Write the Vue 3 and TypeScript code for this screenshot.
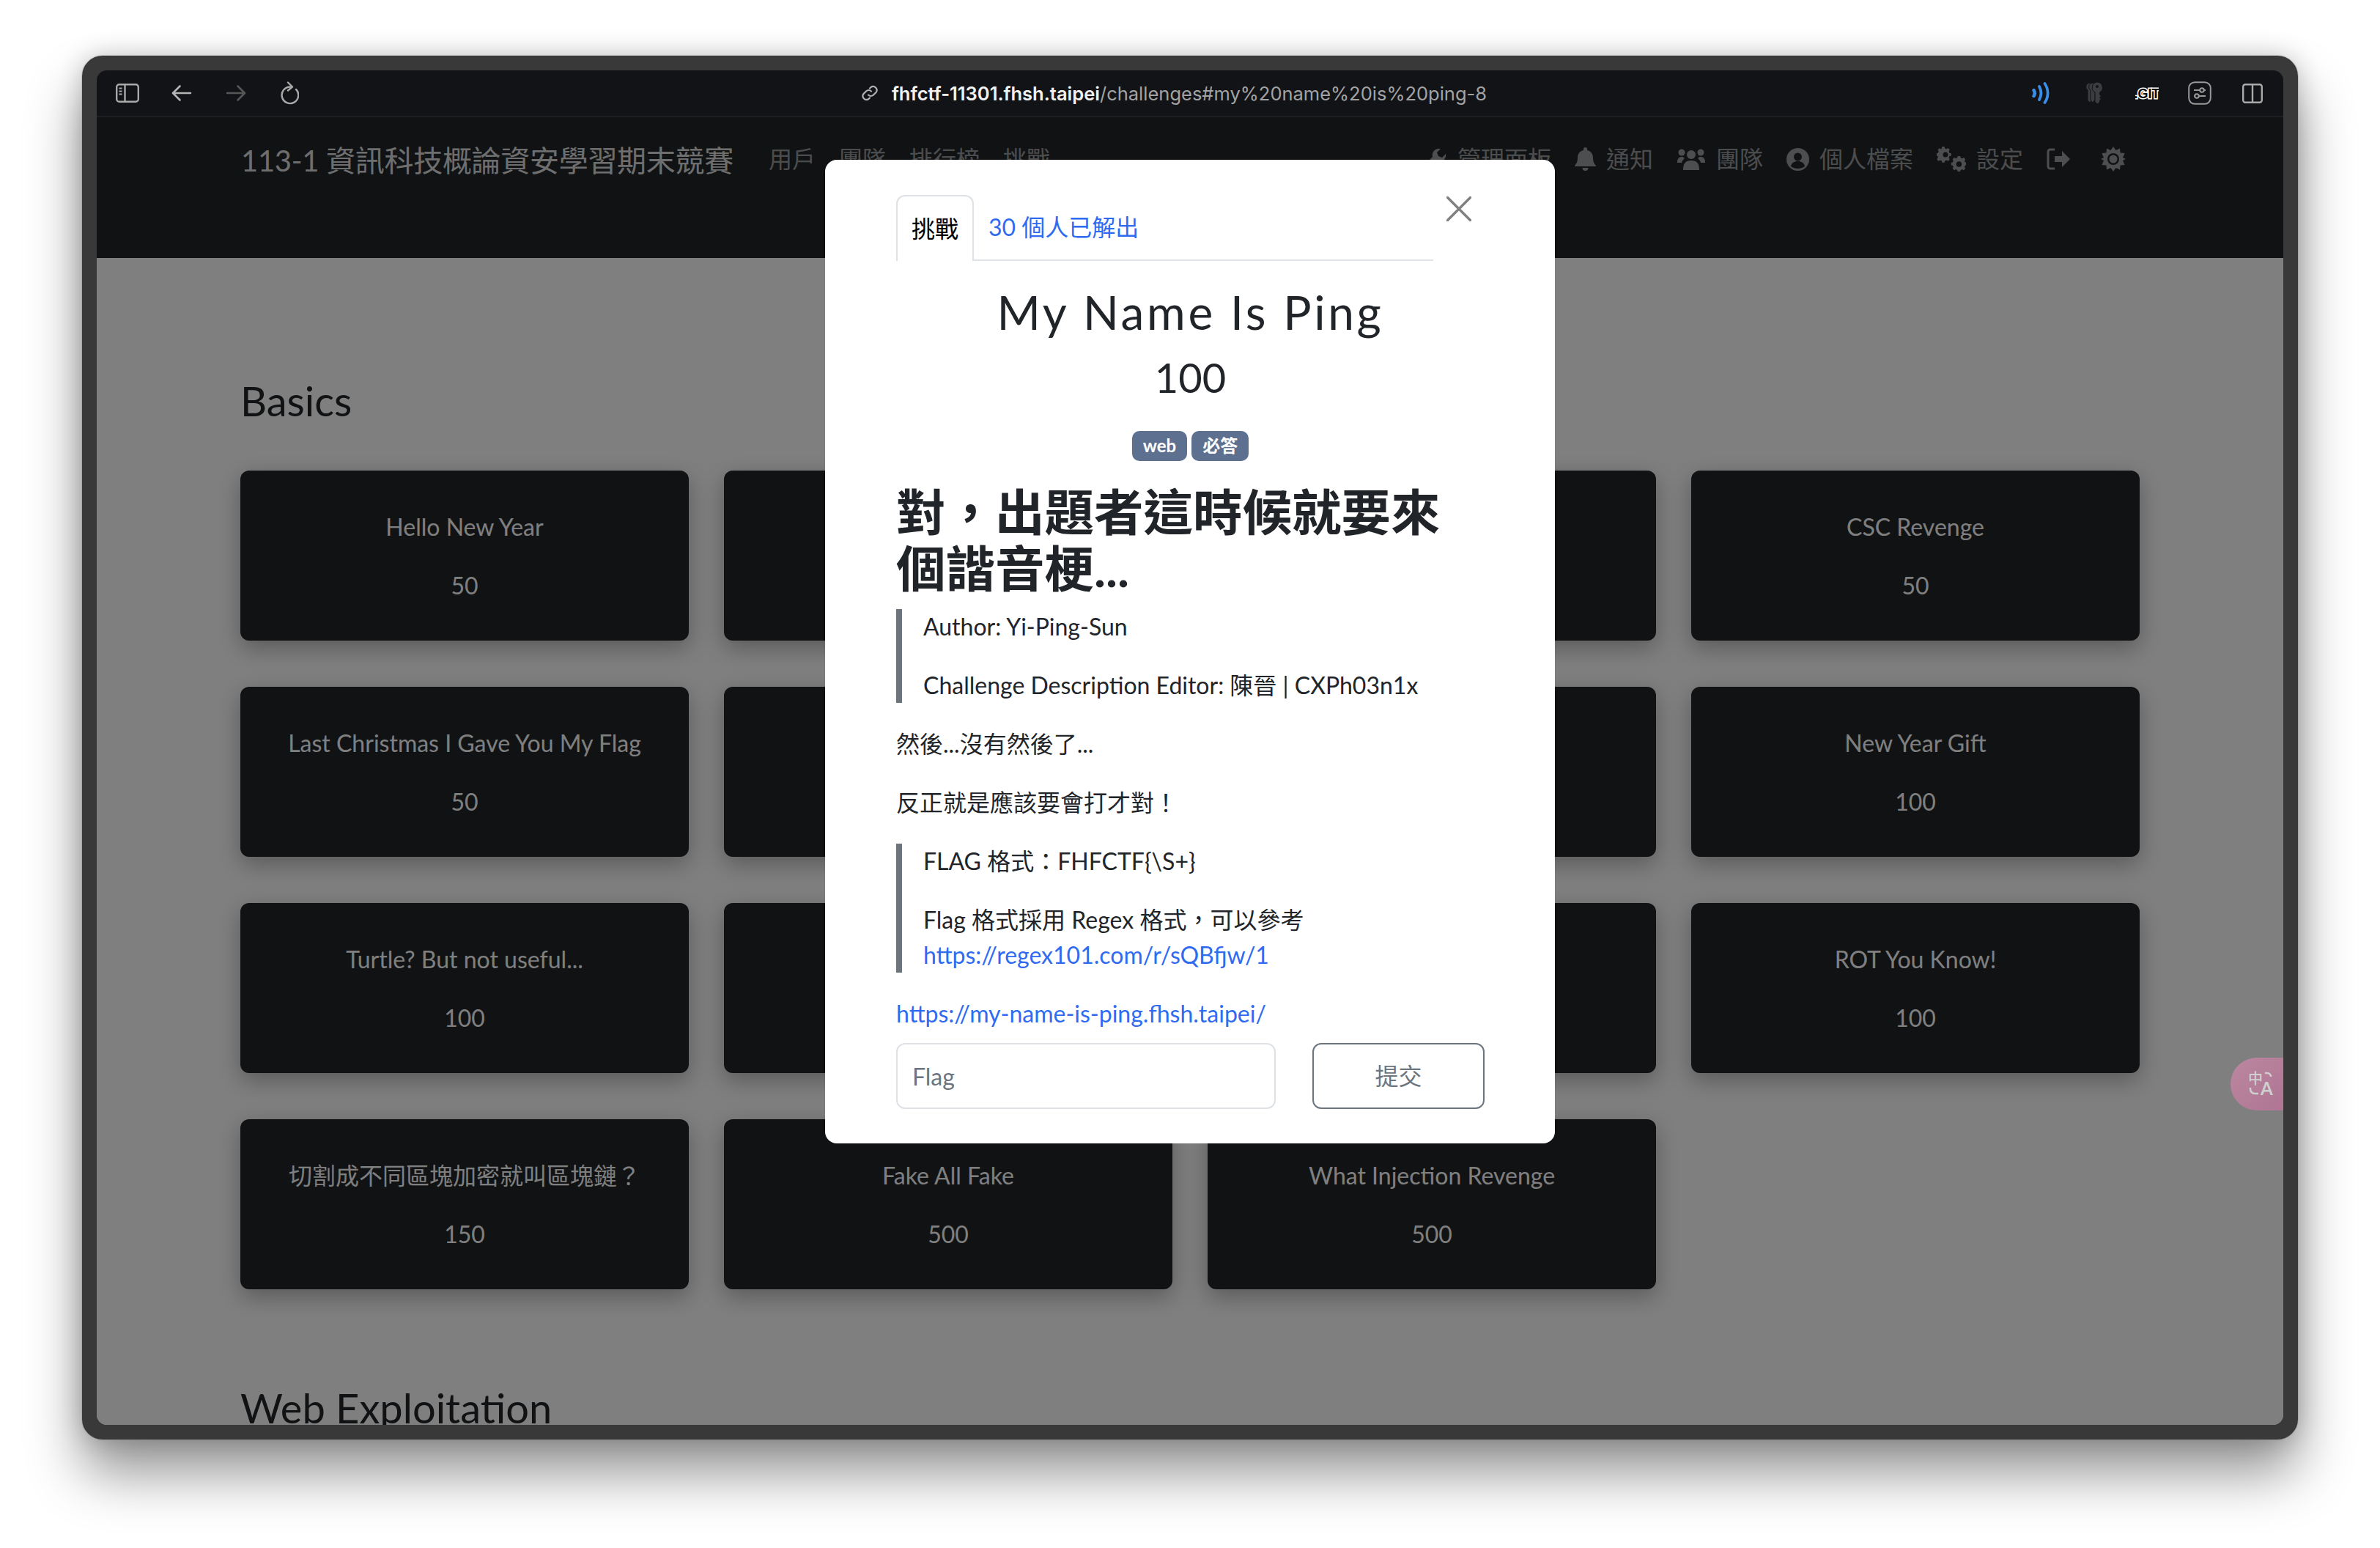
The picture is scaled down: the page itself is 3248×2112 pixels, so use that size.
<script setup lang="ts">
type NavItem = {
  label: string;
  icon: string;
};

type Challenge = {
  name: string;
  score: string;
};

const leftLinks: string[] = ['用戶', '團隊', '排行榜', '挑戰'];

const rightLinks: NavItem[] = [
  { label: '管理面板', icon: 'wrench' },
  { label: '通知', icon: 'bell' },
  { label: '團隊', icon: 'users' },
  { label: '個人檔案', icon: 'user' },
  { label: '設定', icon: 'cogs' },
];

// the middle columns sit behind the dialog on the first three rows
const challenges: Challenge[] = [
  { name: 'Hello New Year', score: '50' },
  { name: '', score: '' },
  { name: '', score: '' },
  { name: 'CSC Revenge', score: '50' },
  { name: 'Last Christmas I Gave You My Flag', score: '50' },
  { name: '', score: '' },
  { name: '', score: '' },
  { name: 'New Year Gift', score: '100' },
  { name: 'Turtle? But not useful...', score: '100' },
  { name: '', score: '' },
  { name: '', score: '' },
  { name: 'ROT You Know!', score: '100' },
  { name: '切割成不同區塊加密就叫區塊鏈？', score: '150' },
  { name: 'Fake All Fake', score: '500' },
  { name: 'What Injection Revenge', score: '500' },
];
</script>

<template>
  <div class="desk">
    <div class="window">
      <header class="toolbar">
        <div class="tool-group">
          <svg class="ico" width="32" height="26" viewBox="0 0 32 26" fill="none" stroke="#a9a9a9" stroke-width="2.4">
            <rect x="1.2" y="1.2" width="29.6" height="23.6" rx="3.5" />
            <path d="M12.5 1.2v23.6" />
            <path d="M4.5 6.5h4M4.5 10.5h4M4.5 14.5h4" stroke-width="1.8" />
          </svg>
          <svg class="ico arrow" width="28" height="24" viewBox="0 0 28 24" fill="none" stroke="#b4b4b4" stroke-width="2.6" stroke-linecap="round" stroke-linejoin="round">
            <path d="M26 12H2.5M11.5 2.5 2 12l9.5 9.5" />
          </svg>
          <svg class="ico arrow fwd" width="28" height="24" viewBox="0 0 28 24" fill="none" stroke="#565656" stroke-width="2.6" stroke-linecap="round" stroke-linejoin="round">
            <path d="M2 12h23.5M16.5 2.5 26 12l-9.5 9.5" />
          </svg>
          <svg class="ico reload" width="26" height="32" viewBox="0 0 26 32" fill="none" stroke="#a9a9a9" stroke-width="2.4" stroke-linecap="round" stroke-linejoin="round">
            <path d="M14 7.500a11.300 11.300 0 1 0 8 3.400" />
            <path d="M11 1.500l6 6-6 5" />
          </svg>
        </div>
        <div class="address">
          <svg width="24" height="24" viewBox="0 0 24 24" fill="none" stroke="#b0b0b0" stroke-width="2.2" stroke-linecap="round">
            <path d="M10 14.500a5 5 0 0 0 7 0l3.500-3.500a5 5 0 0 0-7-7L12 5.500" />
            <path d="M14 9.500a5 5 0 0 0-7 0L3.500 13a5 5 0 0 0 7 7l1.500-1.500" />
          </svg>
          <span class="url"><b>fhfctf-11301.fhsh.taipei</b>/challenges#my%20name%20is%20ping-8</span>
        </div>
        <div class="tool-group right">
          <svg class="signal" width="25" height="30" viewBox="0 0 25 30" fill="none" stroke="#3b8ee8" stroke-linecap="round">
            <path d="M2.500 11c1.600 2.500 1.600 5.500 0 8" stroke-width="4.400" />
            <path d="M10 6c3 5.500 3 12.500 0 18" stroke-width="3.800" />
            <path d="M17.500 2c5.500 8 5.500 18 0 26" stroke-width="3.800" />
          </svg>
          <svg class="keys" width="24" height="30" viewBox="0 0 24 30" fill="#3c3d40" stroke="#121316" stroke-width="1">
            <path d="M6 1a5.500 5.500 0 0 1 3 10v13l-3 4-3-3V11A5.500 5.500 0 0 1 6 1z" />
            <path d="M10 1a5.500 5.500 0 0 1 3 10v13l-3 4-3-3V11a5.500 5.500 0 0 1 3-10z" />
            <path d="M16 0a7.500 7.500 0 0 1 3.500 14v3l2 2-2 2 2 2-2 2v2l-3 3-3.500-3V14A7.500 7.500 0 0 1 16 0z" />
            <circle cx="16" cy="6" r="2" fill="#121316" stroke="none" />
          </svg>
          <svg class="git-ico" width="32" height="24" viewBox="0 0 32 24">
            <text class="git" x="16" y="19" text-anchor="middle">.GIT</text>
          </svg>
          <svg class="slider" width="32" height="32" viewBox="0 0 32 32" fill="none" stroke="#999" stroke-width="2">
            <rect x="1.200" y="1.200" width="29.600" height="29.600" rx="8" />
            <path d="M8 12h16M8 20h16" stroke-width="1.800" />
            <circle cx="19" cy="12" r="2.800" fill="#121316" />
            <circle cx="12" cy="20" r="2.800" fill="#121316" />
          </svg>
          <svg width="28" height="27" viewBox="0 0 28 27" fill="none" stroke="#a9a9a9" stroke-width="2.400">
            <rect x="1.200" y="1.200" width="25.600" height="24.600" rx="3" />
            <path d="M14 1.200v24.600" />
          </svg>
        </div>
      </header>

      <div class="page">
        <nav class="site-nav">
          <span class="brand">113-1 資訊科技概論資安學習期末競賽</span>
          <div class="links">
            <a v-for="link in leftLinks" :key="link">{{ link }}</a>
          </div>
          <div class="links end">
            <a v-for="item in rightLinks" :key="item.label" class="icon-link">
              <svg v-if="item.icon === 'wrench'" width="30" height="30" viewBox="0 0 30 30" fill="currentColor">
                <path d="M28 8l-5 5-5-2-2-5 5-5a9 9 0 0 0-11 11L1 21a4 4 0 0 0 6 6l9-9A9 9 0 0 0 28 8z" />
              </svg>
              <svg v-else-if="item.icon === 'bell'" width="29" height="32" viewBox="0 0 29 32" fill="currentColor">
                <path d="M14.500 0a2.500 2.500 0 0 1 2.500 2.500V4c5 1 8 5 8 10 0 6 1.500 8 4 11v1H0v-1c2.500-3 4-5 4-11 0-5 3-9 8-10V2.500A2.500 2.500 0 0 1 14.500 0zM10.500 28h8a4 4 0 0 1-8 0z" />
              </svg>
              <svg v-else-if="item.icon === 'users'" width="40" height="30" viewBox="0 0 40 30" fill="currentColor">
                <circle cx="7" cy="6" r="4.500" /><circle cx="33" cy="6" r="4.500" /><circle cx="20" cy="9" r="6" />
                <path d="M1 19c0-4 2-7 6-7 2 0 3 .8 4 2-2 1.500-3.500 3.500-4 6H1zM39 19c0-4-2-7-6-7-2 0-3 .8-4 2 2 1.500 3.500 3.500 4 6h6zM9 30c0-9 3-13 11-13s11 4 11 13H9z" />
              </svg>
              <svg v-else-if="item.icon === 'user'" width="31" height="31" viewBox="0 0 31 31">
                <circle cx="15.500" cy="15.500" r="15.500" fill="currentColor" />
                <circle cx="15.500" cy="12" r="5.500" fill="#212529" />
                <path d="M6 25c1-5 4.500-7 9.500-7s8.500 2 9.500 7c-5 4-14 4-19 0z" fill="#212529" />
              </svg>
              <svg v-else width="40" height="34" viewBox="0 0 40 34" fill="currentColor">
                <path d="M13 0h4l.7 3 2.800 1.200 2.700-1.600 2.800 2.800-1.600 2.700L25.600 11l3 .7v4l-3 .7-1.200 2.800 1.600 2.700-2.800 2.800-2.700-1.600-2.800 1.200-.7 3h-4l-.7-3-2.800-1.200-2.700 1.600-2.800-2.800 1.600-2.700L6 16.400l-3-.7v-4l3-.7 1.200-2.800-1.600-2.700L8.400 2.700l2.700 1.600L12.300 3z" transform="translate(-3 0) scale(.8)" />
                <circle cx="12" cy="11" r="3.500" fill="#212529" />
                <path d="M28 12h4l.6 2.600 2.400 1 2.300-1.400 2.700 2.800-1.400 2.200 1 2.400 1.400.4v4l-1.400.4-1 2.400 1.400 2.200-2.700 2.800-2.300-1.400-2.400 1-.6 2.600h-4l-.6-2.600-2.400-1-2.300 1.400-2.700-2.800 1.400-2.200-1-2.400-2.400-.4v-4l2.400-.4 1-2.400-1.400-2.200 2.700-2.800 2.300 1.400 2.400-1z" transform="translate(4 2.500) scale(.88)" />
                <circle cx="30.400" cy="24" r="3.800" fill="#212529" />
              </svg>
              {{ item.label }}
            </a>
            <a class="icon-only">
              <svg width="34" height="30" viewBox="0 0 34 30" fill="none" stroke="currentColor" stroke-width="3">
                <path d="M11 2H5a3 3 0 0 0-3 3v20a3 3 0 0 0 3 3h6" />
                <path d="M11 11h10V4l11 11-11 11v-7H11z" fill="currentColor" stroke="none" />
              </svg>
            </a>
            <a class="icon-only sun">
              <svg width="34" height="34" viewBox="0 0 34 34">
                <path fill="currentColor" d="M17 0l3.500 5 5.500-2.500.6 6 6 .6L30 15l4 2-4 2 2.600 5.900-6 .6-.6 6-5.500-2.500L17 34l-3.500-5L8 31.500l-.6-6-6-.6L4 19l-4-2 4-2-2.600-5.900 6-.6.6-6L13.500 5z" />
                <circle cx="17" cy="17" r="8" fill="#212529" />
                <circle cx="17" cy="17" r="5.500" fill="currentColor" />
              </svg>
            </a>
          </div>
        </nav>

        <main class="board">
          <h2 class="section-title">Basics</h2>
          <div class="grid">
            <div v-for="(c, i) in challenges" :key="i" class="card">
              <span>{{ c.name }}</span>
              <span>{{ c.score }}</span>
            </div>
          </div>
          <h2 class="section-title next">Web Exploitation</h2>
        </main>

        <div class="backdrop">
          <section class="dialog">
            <button class="close" aria-label="Close">
              <svg width="34" height="34" viewBox="0 0 34 34" stroke="#808080" stroke-width="3.400" stroke-linecap="round">
                <path d="M1.500 1.500l31 31M32.500 1.500l-31 31" />
              </svg>
            </button>
            <div class="tabs">
              <a class="tab active">挑戰</a>
              <a class="tab">30 個人已解出</a>
            </div>
            <h3 class="chal-name">My Name Is Ping</h3>
            <h4 class="chal-value">100</h4>
            <div class="tags">
              <span class="tag">web</span>
              <span class="tag">必答</span>
            </div>
            <h1 class="headline">對，出題者這時候就要來個諧音梗...</h1>
            <blockquote>
              <p>Author: Yi-Ping-Sun</p>
              <p>Challenge Description Editor: 陳晉 | CXPh03n1x</p>
            </blockquote>
            <p>然後...沒有然後了...</p>
            <p>反正就是應該要會打才對！</p>
            <blockquote>
              <p>FLAG 格式：FHFCTF{\S+}</p>
              <p>Flag 格式採用 Regex 格式，可以參考<br /><a>https://regex101.com/r/sQBfjw/1</a></p>
            </blockquote>
            <p class="last"><a>https://my-name-is-ping.fhsh.taipei/</a></p>
            <form class="submit-row" @submit.prevent>
              <input class="flag-input" placeholder="Flag" />
              <button class="submit">提交</button>
            </form>
          </section>
        </div>

        <div class="translate-pill">
          <svg width="36" height="36" viewBox="0 0 36 36" fill="none" stroke="#cfcfcf" stroke-width="2.600">
            <text class="pill-zh" x="0" y="18">中</text>
            <text class="pill-a" x="17" y="33">A</text>
            <path d="M23 3h3a5 5 0 0 1 5 5" />
            <path d="M3 23v2a6 6 0 0 0 6 6h5" />
          </svg>
        </div>
      </div>
    </div>
  </div>
</template>

<style>
html,
body {
  margin: 0;
  background: #fff;
}
</style>

<style scoped>
.desk {
  width: 3248px;
  height: 2112px;
  padding: 76px 112px 148px;
  box-sizing: border-box;
  background: #fff;
  overflow: hidden;
  font-family: Lato, "Noto Sans CJK TC", sans-serif;
}

.window {
  height: 100%;
  box-sizing: border-box;
  border: 20px solid #393939;
  border-radius: 28px;
  background: #393939;
  box-shadow: 0 0 0 1px #8a8a8a55, 0 46px 74px rgba(0, 0, 0, 0.42), 0 0 34px rgba(0, 0, 0, 0.2);
  display: flex;
  flex-direction: column;
  overflow: hidden;
}

.toolbar {
  height: 62px;
  flex: none;
  background: #121316;
  border-bottom: 2px solid #1d1e21;
  border-radius: 14px 14px 0 0;
  display: flex;
  align-items: center;
  justify-content: space-between;
  padding: 0 28px 0 26px;
}

.tool-group {
  width: 260px;
  display: flex;
  align-items: center;
  gap: 44px;
}

.fwd {
  margin-left: 2px;
}

.reload {
  margin-left: 2px;
}

.tool-group.right {
  width: 340px;
  justify-content: flex-end;
  gap: 40px;
}

.signal {
  margin-right: 8px;
}

.keys {
  margin-right: 4px;
}

.slider {
  margin-right: 2px;
}

.address {
  display: flex;
  align-items: center;
  gap: 18px;
  font-family: Inter, sans-serif;
  font-size: 25.5px;
  color: #a3a3a3;
  margin-left: 38px;
}

.url b {
  color: #f1f1f1;
  font-weight: 600;
}

.git {
  font-family: "Liberation Sans", sans-serif;
  font-weight: 700;
  font-size: 18px;
  fill: #000;
  stroke: #fff;
  stroke-width: 3px;
  paint-order: stroke;
}

.page {
  flex: 1;
  min-height: 0;
  position: relative;
  overflow: hidden;
  background: #fff;
  border-radius: 0 0 14px 14px;
}

.site-nav {
  height: 192px;
  box-sizing: border-box;
  background: #212529;
  padding: 30px 215px 0 197px;
  display: flex;
  align-items: flex-start;
  font-size: 32px;
  line-height: 54px;
  color: rgba(255, 255, 255, 0.55);
}

.brand {
  font-size: 40px;
  line-height: 58px;
  letter-spacing: -0.3px;
  color: rgba(255, 255, 255, 0.85);
  margin-right: 48px;
}

.links {
  display: flex;
  gap: 32px;
}

.links.end {
  margin-left: auto;
}

.icon-link {
  display: flex;
  align-items: center;
  gap: 14px;
}

.icon-only {
  display: flex;
  align-items: center;
  height: 54px;
}

.sun {
  margin-left: 8px;
}

.board {
  padding: 161px 196px 0;
  color: #212529;
}

.section-title {
  margin: 0 0 62px;
  font-size: 56px;
  line-height: 67px;
  font-weight: 400;
}

.section-title.next {
  margin-top: 128px;
}

.grid {
  display: grid;
  grid-template-columns: repeat(4, 612px);
  column-gap: 48px;
  row-gap: 63px;
}

.card {
  height: 232px;
  box-sizing: border-box;
  background: #212529;
  border-radius: 12px;
  box-shadow: 0 10px 32px rgba(0, 0, 0, 0.3);
  color: #fff;
  font-size: 32px;
  line-height: 48px;
  padding: 53px 0 0;
  display: flex;
  flex-direction: column;
  align-items: center;
  gap: 32px;
}

.backdrop {
  position: absolute;
  inset: 0;
  background: rgba(0, 0, 0, 0.5);
  display: flex;
  justify-content: center;
  padding-top: 58px;
}

.dialog {
  position: relative;
  width: 996px;
  height: 1342px;
  box-sizing: border-box;
  background: #fff;
  border-radius: 16px;
  padding: 48px 96px 48px 97px;
  font-size: 32px;
  line-height: 48px;
  color: #212529;
}

.dialog p {
  margin: 0 0 32px;
}

.dialog a {
  color: #2f6bf0;
}

.close {
  position: absolute;
  top: 50px;
  right: 114px;
  padding: 0;
  border: 0;
  background: none;
  line-height: 0;
}

.tabs {
  width: 733px;
  height: 90px;
  box-sizing: border-box;
  display: flex;
  border-bottom: 2px solid #dee2e6;
}

.tab {
  padding: 20px 20px 0;
  height: 90px;
  box-sizing: border-box;
}

.dialog .tab.active {
  color: #000;
  background: #fff;
  border: 2px solid #dee2e6;
  border-bottom: 0;
  border-radius: 12px 12px 0 0;
  padding: 20px 19px 0;
}

.chal-name {
  margin: 28px 0 0;
  text-align: center;
  font-size: 64px;
  line-height: 84px;
  font-weight: 400;
  letter-spacing: 3.7px;
}

.chal-value {
  margin: 5px 0 0;
  text-align: center;
  font-size: 56px;
  line-height: 84px;
  font-weight: 400;
}

.tags {
  margin-top: 31px;
  display: flex;
  justify-content: center;
  gap: 6px;
}

.tag {
  height: 41px;
  box-sizing: border-box;
  padding: 0 15px;
  border-radius: 10px;
  background: #5e7090;
  color: #fff;
  font-size: 24px;
  line-height: 40px;
  font-weight: 700;
}

.headline {
  margin: 30px 0 18px;
  font-size: 67.5px;
  line-height: 77px;
  font-weight: 700;
}

blockquote {
  margin: 0 0 32px;
  padding-left: 29px;
  border-left: 8px solid #6c757d;
}

blockquote p:last-child {
  margin-bottom: 0;
}

.dialog p.last {
  margin-bottom: 16px;
}

.submit-row {
  display: flex;
  justify-content: space-between;
}

.flag-input {
  width: 518px;
  height: 90px;
  box-sizing: border-box;
  border: 2px solid #dee2e6;
  border-radius: 12px;
  padding: 0 20px;
  font: inherit;
  color: #212529;
  outline: none;
}

.flag-input::placeholder {
  color: #6c757d;
}

.submit {
  width: 235px;
  height: 90px;
  box-sizing: border-box;
  border: 2px solid #6c757d;
  border-radius: 12px;
  background: #fff;
  color: #6c757d;
  font: inherit;
}

.translate-pill {
  position: absolute;
  top: 1283px;
  right: -36px;
  width: 108px;
  height: 72px;
  border-radius: 36px;
  background: linear-gradient(135deg, #bb87a0, #ad7190);
  display: flex;
  align-items: center;
  padding-left: 24px;
  box-sizing: border-box;
}

.translate-pill svg {
  overflow: visible;
}

.pill-zh {
  font-family: "Noto Sans CJK TC", sans-serif;
  font-size: 20px;
  font-weight: 500;
  fill: #cfcfcf;
  stroke: none;
}

.pill-a {
  font-family: Lato, sans-serif;
  font-size: 24px;
  font-weight: 700;
  fill: #cfcfcf;
  stroke: none;
}
</style>
